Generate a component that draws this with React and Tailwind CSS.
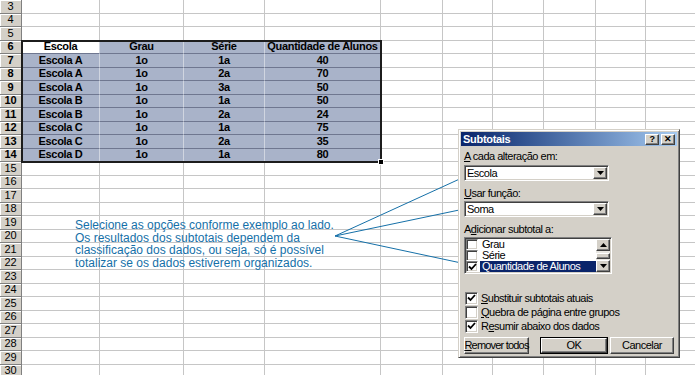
import React from 'react'

const COLS = ['w-[78px]', 'w-[84px]', 'w-[81px]', 'w-[116px]', 'w-[62px]', 'w-[50px]', 'w-[51px]', 'w-[52px]', 'w-[50px]', 'w-[80px]']

const DATA = [
  ['Escola', 'Grau', 'Série', 'Quantidade de Alunos'],
  ['Escola A', '1o', '1a', '40'],
  ['Escola A', '1o', '2a', '70'],
  ['Escola A', '1o', '3a', '50'],
  ['Escola B', '1o', '1a', '50'],
  ['Escola B', '1o', '2a', '24'],
  ['Escola C', '1o', '1a', '75'],
  ['Escola C', '1o', '2a', '35'],
  ['Escola D', '1o', '1a', '80'],
]

const ROWS = Array.from({ length: 28 }, (_, i) => i + 3)

const raised = 'bg-[#d4d0c8] border border-t-[#ffffff] border-l-[#ffffff] border-r-[#404040] border-b-[#404040] shadow-[inset_-1px_-1px_0_#808080]'
const sunken = 'bg-white border border-t-[#808080] border-l-[#808080] border-r-[#ffffff] border-b-[#ffffff] shadow-[inset_1px_1px_0_#404040,inset_-1px_-1px_0_#d4d0c8]'

function DownArrow() {
  return (
    <svg width="7" height="4" viewBox="0 0 7 4"><path d="M0 0h7L3.5 4z" fill="#000" /></svg>
  )
}

function UpArrow() {
  return (
    <svg width="7" height="4" viewBox="0 0 7 4"><path d="M0 4h7L3.5 0z" fill="#000" /></svg>
  )
}

function Check() {
  return (
    <svg width="9" height="8" viewBox="0 0 9 8">
      <path d="M1 3.5 L3.5 6 L8 1" fill="none" stroke="#000" strokeWidth="1.8" />
    </svg>
  )
}

function Box({ checked, size = 'w-[13px] h-[13px]' }) {
  return (
    <div className={`${size} shrink-0 flex items-center justify-center ${sunken}`}>
      {checked && <Check />}
    </div>
  )
}

function Select({ value }) {
  return (
    <div className={`w-[145px] h-[16px] flex items-center ${sunken}`}>
      <span className="flex-1 pl-[2px] leading-none">{value}</span>
      <div className={`w-[14px] h-[12px] mr-[1px] flex items-center justify-center ${raised}`}>
        <DownArrow />
      </div>
    </div>
  )
}

function Sheet() {
  return (
    <div className="flex flex-col">
      {ROWS.map(r => {
        const dataRow = r >= 6 && r <= 14 ? DATA[r - 6] : null
        return (
          <div key={r} className="flex h-[13.5px]">
            <div className={`w-[22px] shrink-0 flex items-center justify-center bg-[#d4d0c8] border-r border-b border-r-[#808080] border-b-[#808080] shadow-[inset_1px_1px_0_#fff] text-[11px] leading-none text-black ${dataRow ? 'font-bold' : ''}`}>
              {r}
            </div>
            {COLS.map((w, ci) => {
              const inSel = dataRow && ci < 4
              const active = r === 6 && ci === 0
              let cls = 'border-r border-b border-r-[#c6c6c6] border-b-[#c6c6c6] bg-white'
              if (inSel) cls = active
                ? 'border-r border-b border-r-[#d0d5e0] border-b-[#6f7790] bg-white'
                : 'border-r border-b border-r-[#d0d5e0] border-b-[#6f7790] bg-[#a9b3c9]'
              return (
                <div key={ci} className={`${w} shrink-0 flex items-center justify-center overflow-visible whitespace-nowrap font-bold text-[11px] tracking-[-0.3px] leading-none text-black ${cls}`}>
                  {inSel ? dataRow[ci] : ''}
                </div>
              )
            })}
          </div>
        )
      })}
    </div>
  )
}

function Dialog() {
  return (
    <div className="absolute left-[458px] top-[129px] w-[222px] h-[229px] p-[2px] bg-[#d4d0c8] border border-t-[#d4d0c8] border-l-[#d4d0c8] border-r-[#404040] border-b-[#404040] shadow-[inset_1px_1px_0_#fff,inset_-1px_-1px_0_#808080] text-[11px] tracking-[-0.5px] text-black flex flex-col whitespace-nowrap">
      <div className="h-[14px] flex items-center justify-between bg-linear-to-r from-[#0a246a] to-[#a6caf0] pl-[2px] pr-[2px]">
        <span className="text-white font-bold tracking-[-0.3px] leading-none">Subtotais</span>
        <div className="flex gap-[2px]">
          <div className={`w-[14px] h-[11px] flex items-center justify-center text-[9px] font-bold leading-none ${raised}`}>?</div>
          <div className={`w-[14px] h-[11px] flex items-center justify-center text-[9px] font-bold leading-none ${raised}`}>✕</div>
        </div>
      </div>

      <div className="flex flex-col pl-[3px]">
        <div className="mt-[4px] h-[13px] leading-[13px]"><span className="underline">A</span> cada alteração em:</div>
        <div className="mt-[2px]"><Select value="Escola" /></div>
        <div className="mt-[6px] h-[13px] leading-[13px]"><span className="underline">U</span>sar função:</div>
        <div className="mt-[1px]"><Select value="Soma" /></div>
        <div className="mt-[6px] h-[13px] leading-[13px]">A<span className="underline">d</span>icionar subtotal a:</div>
        <div className={`mt-[1px] w-[148px] h-[37px] flex ${sunken}`}>
          <div className="flex-1 flex flex-col pt-[1px]">
            {[['Grau', false, false], ['Série', false, false], ['Quantidade de Alunos', true, true]].map(([t, c, s]) => (
              <div key={t} className="h-[11px] flex items-center">
                <div className="ml-[1px]"><Box checked={c} size="w-[12px] h-[11px]" /></div>
                <span className={`ml-[2px] flex-1 h-[11px] leading-[11px] pl-[2px] ${s ? 'bg-[#0a246a] text-white' : ''}`}>{t}</span>
              </div>
            ))}
          </div>
          <div className="w-[14px] flex flex-col mr-[1px] mt-[1px] mb-[1px] bg-[#e8e6e1]">
            <div className={`h-[12px] flex items-center justify-center ${raised}`}><UpArrow /></div>
            <div className="flex-1 flex flex-col justify-center">
              <div className={`h-[6px] ${raised}`}></div>
            </div>
            <div className={`h-[12px] flex items-center justify-center ${raised}`}><DownArrow /></div>
          </div>
        </div>

        <div className="mt-[17px] flex flex-col">
          {[['S', 'ubstituir subtotais atuais', true, ''], ['Q', 'uebra de página entre grupos', false, ''], ['e', 'sumir abaixo dos dados', true, 'R']].map(([u, rest, c, pre]) => (
            <div key={rest} className="h-[14px] flex items-center ml-[1px]">
              <Box checked={c} />
              <span className="ml-[3px] leading-none">{pre}<span className="underline">{u}</span>{rest}</span>
            </div>
          ))}
        </div>

        <div className="mt-[4px] flex h-[17px]">
          <div className={`w-[65px] shrink-0 flex items-center justify-center tracking-[-0.8px] ${raised}`}><span className="whitespace-nowrap"><span className="underline">R</span>emover todos</span></div>
          <div className="ml-[11px] w-[68px] shrink-0 border border-black flex">
            <div className={`flex-1 flex items-center justify-center ${raised}`}>OK</div>
          </div>
          <div className={`ml-[2px] w-[64px] shrink-0 flex items-center justify-center ${raised}`}>Cancelar</div>
        </div>
      </div>
    </div>
  )
}

export default function App() {
  return (
    <div className="relative w-[695px] h-[375px] overflow-hidden bg-white font-['Liberation_Sans',Arial,sans-serif]">
      <Sheet />

      {/* selection frame */}
      <div className="absolute left-[21px] top-[40px] w-[361px] h-[123px] border-2 border-[#1c1c1c] pointer-events-none">
        <div className="absolute -right-[4px] -bottom-[4px] w-[6px] h-[6px] bg-black border border-white"></div>
      </div>

      <div className="absolute left-[75px] top-[219px] text-[12px] leading-[12.5px] text-[#1570a8] whitespace-nowrap">
        <div>Selecione as opções conforme exemplo ao lado.</div>
        <div>Os resultados dos subtotais dependem da</div>
        <div>classificação dos dados, ou seja, só é possível</div>
        <div>totalizar se os dados estiverem organizados.</div>
      </div>

      <svg className="absolute inset-0 pointer-events-none" width="695" height="375">
        <g stroke="#1570a8" strokeWidth="1" fill="none">
          <line x1="335" y1="236" x2="464" y2="177" />
          <line x1="335" y1="236" x2="464" y2="209" />
          <line x1="335" y1="236" x2="466" y2="264" />
        </g>
      </svg>

      <Dialog />
    </div>
  )
}
